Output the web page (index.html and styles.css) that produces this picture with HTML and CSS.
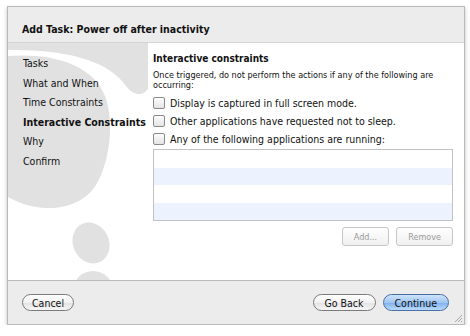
FILE: index.html
```html
<!DOCTYPE html>
<html lang="en">
<head>
  <meta charset="UTF-8" />
  <title>Add Task</title>
  <link rel="stylesheet" href="styles.css">
</head>
<body>
  <div class="window">
    <!-- TITLE -->
    <div class="titlebar">Add Task: Power off after inactivity</div>

    <!-- CONTENT -->
    <div class="content">
      <!-- background logo, page coords shifted into the content box -->
      <svg class="watermark" width="456" height="237" viewBox="0 0 456 237">
        <g transform="translate(-8,-42)" fill="#e1e1e1">
          <path d="M8 41 L148 41 L148 88 C141 97 132 93 126 85 C110 62 72 48 8 49 Z" />
          <path d="M8 55 C50 52 94 62 106 98 C114 122 110 160 96 184 C86 200 66 208 46 207 C28 206 15 200 8 196 Z" />
          <ellipse cx="91" cy="242" rx="18" ry="21" transform="rotate(-25 91 242)" />
          <circle cx="93" cy="290" r="20" />
        </g>
      </svg>

      <ul class="steps">
        <li>Tasks</li>
        <li>What and When</li>
        <li>Time Constraints</li>
        <li class="current">Interactive Constraints</li>
        <li>Why</li>
        <li>Confirm</li>
      </ul>

      <div class="pane">
        <h2>Interactive constraints</h2>
        <p class="note">Once triggered, do not perform the actions if any of the following are occurring:</p>
        <label class="check"><span class="box"></span>Display is captured in full screen mode.</label>
        <label class="check"><span class="box"></span>Other applications have requested not to sleep.</label>
        <label class="check"><span class="box"></span>Any of the following applications are running:</label>
        <div class="list">
          <div class="row"></div>
          <div class="row alt"></div>
          <div class="row"></div>
          <div class="row alt"></div>
        </div>
        <div class="list-actions">
          <button class="small" disabled>Add...</button>
          <button class="small" disabled>Remove</button>
        </div>
      </div>
    </div>

    <!-- FOOTER -->
    <div class="footer">
      <button class="pill">Cancel</button>
      <span class="spacer"></span>
      <button class="pill wide">Go Back</button>
      <button class="pill wide default">Continue</button>
      <svg class="grip" width="9" height="9" viewBox="0 0 9 9">
        <path d="M8 1 L1 8 M8 4 L4 8 M8 7 L7 8" stroke="#a8a8a8" stroke-width="1" />
      </svg>
    </div>
  </div>
</body>
</html>
```

FILE: styles.css
```css
/* GLOBAL */
*, *::before, *::after { box-sizing: border-box; margin: 0; padding: 0; }
body {
  background: #fff;
  font-family: "DejaVu Sans Condensed", "DejaVu Sans", sans-serif;
  color: #111;
}

/* WINDOW */
.window {
  margin: 6px 0 0 7px;
  width: 458px;
  border: 1px solid #b9b9b9;
  box-shadow: 0 2px 4px rgba(0,0,0,0.25);
}
.titlebar {
  height: 36px;
  background: #ececec;
  border-bottom: 1px solid #d4d4d4;
  padding: 16px 0 0 14px;
  font-size: 10.5px;
  font-weight: bold;
}

/* CONTENT */
.content {
  position: relative;
  height: 237px;
  background: #fff;
  display: flex;
  overflow: hidden;
}
.watermark {
  position: absolute;
  top: 0; left: 0;
  display: block;
}
.steps {
  position: relative;
  list-style: none;
  width: 145px;
  padding: 14px 0 0 15px;
  font-size: 10.5px;
  white-space: nowrap;
}
.steps li { height: 19.6px; }
.steps li.current { font-weight: bold; }

.pane {
  position: relative;
  flex: 1;
  padding: 10px 11px 0 0;
}
.pane h2 {
  font-size: 10px;
  font-weight: bold;
  margin-bottom: 6px;
}
.note {
  font-size: 9px;
  line-height: 10px;
  margin-bottom: 4px;
}
.check {
  display: flex;
  align-items: center;
  height: 18px;
  font-size: 10.5px;
  white-space: nowrap;
}
.box {
  width: 12px;
  height: 12px;
  margin-right: 5px;
  border: 1px solid #8a8a8a;
  border-radius: 2px;
  background: linear-gradient(#fdfdfd, #e4e4e4);
}

.list {
  margin-top: 1px;
  height: 72px;
  border: 1px solid #c2c2c2;
  background: #fff;
}
.row { height: 17.5px; }
.row.alt { background: #edf3fe; }

.list-actions {
  display: flex;
  justify-content: flex-end;
  gap: 7px;
  margin-top: 6px;
}
button {
  font-family: inherit;
  cursor: default;
}
.small {
  height: 19px;
  padding: 0 11px;
  font-size: 9px;
  color: #9a9a9a;
  background: linear-gradient(#fefefe, #f0f0f0);
  border: 1px solid #c6c6c6;
  border-radius: 3px;
}

/* FOOTER */
.footer {
  position: relative;
  height: 44px;
  background: #ececec;
  border-top: 1px solid #b9b9b9;
  display: flex;
  align-items: center;
  padding: 0 15px 0 14px;
  gap: 7px;
}
.spacer { flex: 1; }
.pill {
  height: 17px;
  padding: 0 9px;
  font-size: 10.5px;
  color: #111;
  border: 1px solid #7a7a7a;
  border-radius: 9px;
  background: linear-gradient(#ffffff 0%, #f1f1f1 50%, #e2e2e2 51%, #f6f6f6 100%);
}
.pill.wide { min-width: 63px; }
.pill.default {
  padding: 0 11px;
  border-color: #4a6fa5;
  background: linear-gradient(#cfe3fb 0%, #9fc6f2 50%, #7fb0ec 51%, #b9dafc 100%);
}
.grip {
  position: absolute;
  right: 1px; bottom: 1px;
}
```
